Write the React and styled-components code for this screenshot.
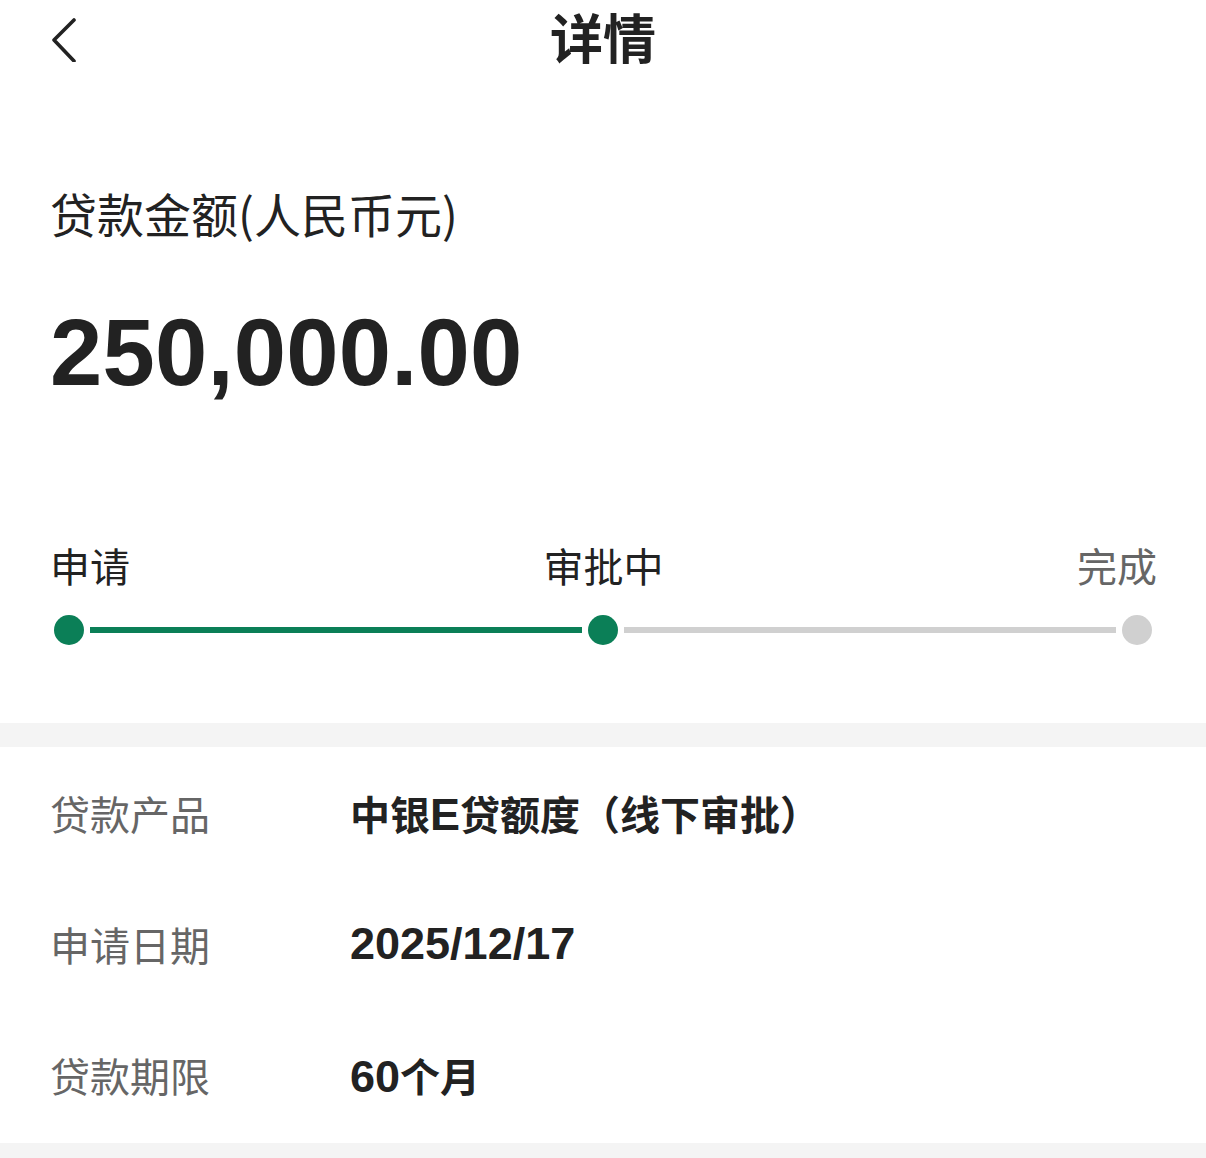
import React from "react"
import styled, { createGlobalStyle } from "styled-components"

const GlobalStyle = createGlobalStyle`
    html, body {
        margin: 0;
        padding: 0;
        background: #ffffff;
    }
    body {
        font-family: "Liberation Sans", "Noto Sans CJK SC", sans-serif;
        color: #222222;
    }
`

const steps = [
    { label: "申请", done: true },
    { label: "审批中", done: true },
    { label: "完成", done: false },
]

const details = [
    { label: "贷款产品", value: "中银E贷额度（线下审批）" },
    { label: "申请日期", value: "2025/12/17" },
    { label: "贷款期限", value: "60个月" },
]

// split a value into latin / cjk runs so digits and hanzi get their own sizes
const splitRuns = text =>
    text.split(/([\u3000-\u9fff\uff00-\uffef]+)/).filter(Boolean).map(t => ({
        text: t,
        cjk: /[\u3000-\u9fff\uff00-\uffef]/.test(t),
    }))

const BackIcon = () => (
    <svg width="30" height="46" viewBox="0 0 30 46" fill="none">
        <path d="M24 4 L4 24 L24 45" stroke="#222" strokeWidth="3.6" strokeLinecap="round" strokeLinejoin="round" />
    </svg>
)

export default function App() {
    return (
        <>
            <GlobalStyle />
            <Page>
                <Header>
                    <BackButton aria-label="返回">
                        <BackIcon />
                    </BackButton>
                    <Title>详情</Title>
                    <span />
                </Header>

                <AmountSection>
                    <AmountLabel>贷款金额(人民币元)</AmountLabel>
                    <Amount>250,000.00</Amount>
                </AmountSection>

                <Progress>
                    <StepLabels>
                        {steps.map((s, i) => (
                            <StepLabel key={s.label} $done={s.done} $align={i === 0 ? "start" : i === steps.length - 1 ? "end" : "center"}>
                                {s.label}
                            </StepLabel>
                        ))}
                    </StepLabels>
                    <Track>
                        <Dot $done />
                        <Line $done />
                        <Dot $done />
                        <Line />
                        <Dot />
                    </Track>
                </Progress>

                <Band />

                <DetailList>
                    {details.map(d => (
                        <DetailRow key={d.label}>
                            <DetailLabel>{d.label}</DetailLabel>
                            <DetailValue>
                                {splitRuns(d.value).map((r, i) =>
                                    r.cjk ? <CjkRun key={i}>{r.text}</CjkRun> : <span key={i}>{r.text}</span>
                                )}
                            </DetailValue>
                        </DetailRow>
                    ))}
                </DetailList>

                <Band $grow />
            </Page>
        </>
    )
}

const Page = styled.div`
    width: 1206px;
    min-height: 1158px;
    display: flex;
    flex-direction: column;
    background: #fff;
`

const Header = styled.header`
    height: 78px;
    display: grid;
    grid-template-columns: 1fr auto 1fr;
    align-items: center;
    padding: 0 50px;
`

const BackButton = styled.button`
    justify-self: start;
    border: 0;
    background: none;
    padding: 0;
    display: flex;
    align-items: center;
    cursor: pointer;
`

const Title = styled.h1`
    margin: 0 0 6px;
    font-family: "Noto Sans CJK SC", sans-serif;
    font-size: 53px;
    font-weight: 700;
    line-height: 72px;
    color: #222;
`

const AmountSection = styled.section`
    padding: 0 50px;
    margin-top: 105px;
`

const AmountLabel = styled.div`
    font-family: "Noto Sans CJK SC", sans-serif;
    font-size: 47px;
    line-height: 60px;
    color: #222;
`

const Amount = styled.div`
    margin-top: 60px;
    font-family: "Liberation Sans", Arial, sans-serif;
    font-size: 94px;
    font-weight: 700;
    line-height: 100px;
    color: #222;
    letter-spacing: 0.2px;
`

const Progress = styled.section`
    margin-top: 138px;
    padding-bottom: 78px;
`

const StepLabels = styled.div`
    display: grid;
    grid-template-columns: 1fr auto 1fr;
    padding: 0 49px 0 50px;
`

const StepLabel = styled.div`
    justify-self: ${p => p.$align};
    font-family: "Noto Sans CJK SC", sans-serif;
    font-size: 40px;
    line-height: 48px;
    color: ${p => (p.$done ? "#222" : "#666")};
`

const Track = styled.div`
    margin-top: 26px;
    height: 30px;
    padding: 0 54px;
    display: flex;
    align-items: center;
    gap: 6px;
`

const Dot = styled.span`
    width: 30px;
    height: 30px;
    flex: none;
    border-radius: 50%;
    background: ${p => (p.$done ? "#0b7f57" : "#d0d0d0")};
`

const Line = styled.span`
    flex: 1;
    height: 6px;
    background: ${p => (p.$done ? "#0b7f57" : "#d0d0d0")};
`

const Band = styled.div`
    height: 24px;
    background: #f4f4f4;
    ${p => p.$grow && "flex: 1;"}
`

const DetailList = styled.section`
    padding-bottom: 3px;
`

const DetailRow = styled.div`
    height: 131px;
    display: grid;
    grid-template-columns: 300px 1fr;
    align-items: center;
    padding-left: 50px;
`

const DetailLabel = styled.div`
    font-family: "Noto Sans CJK SC", sans-serif;
    font-size: 40px;
    color: #666;
`

const DetailValue = styled.div`
    font-family: "Liberation Sans", "Noto Sans CJK SC", sans-serif;
    font-size: 45px;
    font-weight: 700;
    color: #222;
`

const CjkRun = styled.span`
    font-family: "Noto Sans CJK SC", sans-serif;
    font-size: 40px;
`
